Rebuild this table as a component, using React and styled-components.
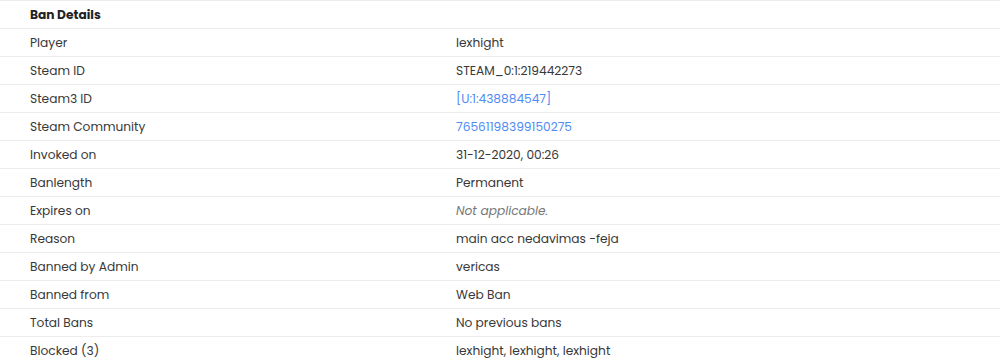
import React from "react";
import styled, { createGlobalStyle } from "styled-components";

const GlobalStyle = createGlobalStyle`
  html, body {
    margin: 0;
    padding: 0;
    background: #fff;
  }
  body {
    font-family: "Poppins", "Inter", "Liberation Sans", sans-serif;
    font-size: 12.2px;
    color: #333;
  }
`;

const StyledTable = styled.div`
  width: 1000px;
  display: flex;
  flex-direction: column;
`;

const StyledRow = styled.div`
  display: grid;
  grid-template-columns: 426px 1fr;
  height: 28px;
  box-sizing: border-box;
  border-top: 1px solid #ececec;
  padding-left: 30px;
  align-items: center;
`;

const StyledHeader = styled.div`
  font-weight: 700;
  color: #222;
`;

const StyledLabel = styled.div`
  color: #383838;
`;

const StyledValue = styled.div`
  color: ${(props) => (props.$link ? "#4f8cf3" : props.$muted ? "#777" : "#383838")};
  font-style: ${(props) => (props.$muted ? "italic" : "normal")};
`;

const rows = [
  { label: "Player", value: "lexhight" },
  { label: "Steam ID", value: "STEAM_0:1:219442273" },
  { label: "Steam3 ID", value: "[U:1:438884547]", link: true },
  { label: "Steam Community", value: "76561198399150275", link: true },
  { label: "Invoked on", value: "31-12-2020, 00:26" },
  { label: "Banlength", value: "Permanent" },
  { label: "Expires on", value: "Not applicable.", muted: true },
  { label: "Reason", value: "main acc nedavimas -feja" },
  { label: "Banned by Admin", value: "vericas" },
  { label: "Banned from", value: "Web Ban" },
  { label: "Total Bans", value: "No previous bans" },
  { label: "Blocked (3)", value: "lexhight, lexhight, lexhight" },
];

const App = () => {
  return (
    <>
      <GlobalStyle />
      <StyledTable>
        <StyledRow>
          <StyledHeader>Ban Details</StyledHeader>
          <div />
        </StyledRow>
        {rows.map((row, idx) => (
          <StyledRow key={idx}>
            <StyledLabel>{row.label}</StyledLabel>
            <StyledValue $link={row.link} $muted={row.muted}>
              {row.value}
            </StyledValue>
          </StyledRow>
        ))}
      </StyledTable>
    </>
  );
};

export default App;
